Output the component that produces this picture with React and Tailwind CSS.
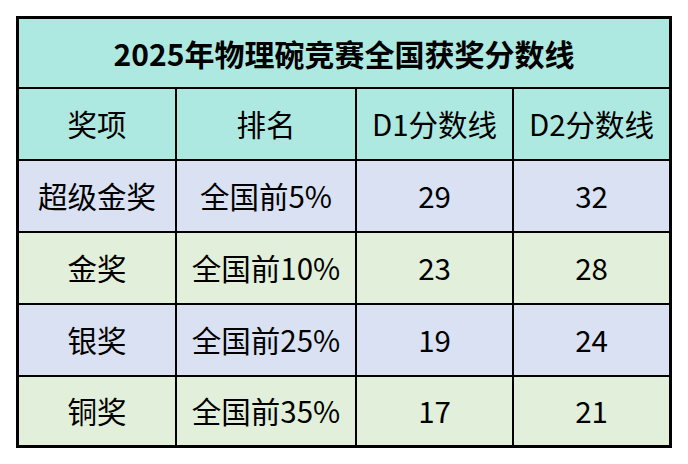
import React from 'react'

const rows = [
  { award: '超级金奖', rank: '全国前5%', d1: '29', d2: '32', bg: 'bg-[#d9e1f2]' },
  { award: '金奖', rank: '全国前10%', d1: '23', d2: '28', bg: 'bg-[#e2efda]' },
  { award: '银奖', rank: '全国前25%', d1: '19', d2: '24', bg: 'bg-[#d9e1f2]' },
  { award: '铜奖', rank: '全国前35%', d1: '17', d2: '21', bg: 'bg-[#e2efda]' },
]

const font = { fontFamily: '"Noto Sans CJK SC", "Noto Sans", sans-serif' }

function Cell({ children, bg }) {
  return (
    <div className={`${bg} flex items-center justify-center text-[29.5px] text-black leading-none`}>
      {children}
    </div>
  )
}

export default function App() {
  return (
    <div className="w-[688px] h-[464px] bg-white pt-[16px] pl-[16px]" style={font}>
      <div className="w-[656px] border-[3px] border-black bg-black grid grid-cols-[156px_178px_155px_155px] grid-rows-[68px_70px_70px_70px_70px_68px] gap-[2px]">
        <div className="col-span-4 bg-[#aee9e1] flex items-center justify-center text-[30px] font-bold text-black leading-none">
          2025年物理碗竞赛全国获奖分数线
        </div>
        <Cell bg="bg-[#aee9e1]">奖项</Cell>
        <Cell bg="bg-[#aee9e1]">排名</Cell>
        <Cell bg="bg-[#aee9e1]">D1分数线</Cell>
        <Cell bg="bg-[#aee9e1]">D2分数线</Cell>
        {rows.map((r) => (
          <React.Fragment key={r.award}>
            <Cell bg={r.bg}>{r.award}</Cell>
            <Cell bg={r.bg}>{r.rank}</Cell>
            <Cell bg={r.bg}>{r.d1}</Cell>
            <Cell bg={r.bg}>{r.d2}</Cell>
          </React.Fragment>
        ))}
      </div>
    </div>
  )
}
